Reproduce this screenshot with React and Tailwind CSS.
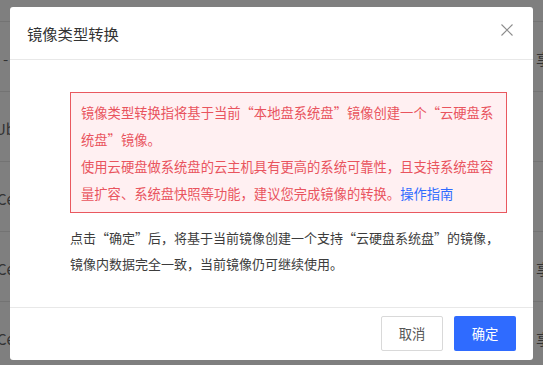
import React from 'react';

const rows = [
  { left: '-', leftClass: 'ml-[3px]', right: '享' },
  { left: 'Ubuntu', leftClass: '-ml-[5px]', right: '' },
  { left: 'CentOS', leftClass: '-ml-[3px]', right: '' },
  { left: 'CentOS', leftClass: '-ml-[3px]', right: '享' },
  { left: 'CentOS', leftClass: '-ml-[3px]', right: '享' },
];

const CloseIcon = () => (
  <svg width="12" height="12" viewBox="0 0 12 12" fill="none" stroke="#8c8c8c" strokeWidth="1.1">
    <path d="M0.5 0.5 L11.5 11.5 M11.5 0.5 L0.5 11.5" />
  </svg>
);

export default function App() {
  return (
    <div className="relative h-[365px] w-[543px] overflow-hidden bg-white font-['Noto_Sans_CJK_SC','Liberation_Sans',sans-serif]">
      {/* page behind the dialog */}
      <div className="h-[22px] border-b border-[#e6e6e6]" />
      {rows.map((row, i) => (
        <div
          key={i}
          className="flex h-[70px] items-center justify-between border-b border-[#e6e6e6] pt-[6px] text-[15px] text-[#666]"
        >
          <span className={row.leftClass}>{row.left}</span>
          <span className="-mr-[8px]">{row.right}</span>
        </div>
      ))}

      {/* mask */}
      <div className="absolute inset-0 bg-black/50" />

      {/* dialog */}
      <div className="absolute left-[10px] top-[7px] flex h-[353px] w-[523px] flex-col rounded-[3px] bg-white">
        <div className="flex h-[53px] shrink-0 items-start justify-between border-b border-[#e8e8e8] pl-[17px] pr-[20px]">
          <span className="mt-[15px] text-[15.3px] leading-[22px] text-[#333]">镜像类型转换</span>
          <button className="mt-[17px]" aria-label="关闭">
            <CloseIcon />
          </button>
        </div>

        <div className="flex-1 pl-[60px] pr-[26px] pt-[32px]">
          <div className="border border-[#e9585f] bg-[#fff0f2] pb-[5px] pl-[10px] pr-[8px] pt-[6px] text-[13.3px] leading-[27px] text-[#e9545e]">
            <p>镜像类型转换指将基于当前“本地盘系统盘”镜像创建一个“云硬盘系统盘”镜像。</p>
            <p>
              使用云硬盘做系统盘的云主机具有更高的系统可靠性，且支持系统盘容量扩容、系统盘快照等功能，建议您完成镜像的转换。
              <a className="text-[#2f6bff]">操作指南</a>
            </p>
          </div>
          <p className="-mr-[2px] mt-[12px] text-[13px] leading-[25.5px] text-[#3c3c3c]">
            点击“确定”后，将基于当前镜像创建一个支持“云硬盘系统盘”的镜像，镜像内数据完全一致，当前镜像仍可继续使用。
          </p>
        </div>

        <div className="flex h-[53px] shrink-0 justify-end gap-[11px] border-t border-[#e8e8e8] pr-[17px] pt-[8px]">
          <button className="h-[35px] w-[62px] rounded-[2px] border border-[#d9d9d9] bg-white text-[13.3px] text-[#555]">
            取消
          </button>
          <button className="h-[35px] w-[62px] rounded-[2px] bg-[#2f6bff] text-[13.3px] text-white">
            确定
          </button>
        </div>
      </div>
    </div>
  );
}
